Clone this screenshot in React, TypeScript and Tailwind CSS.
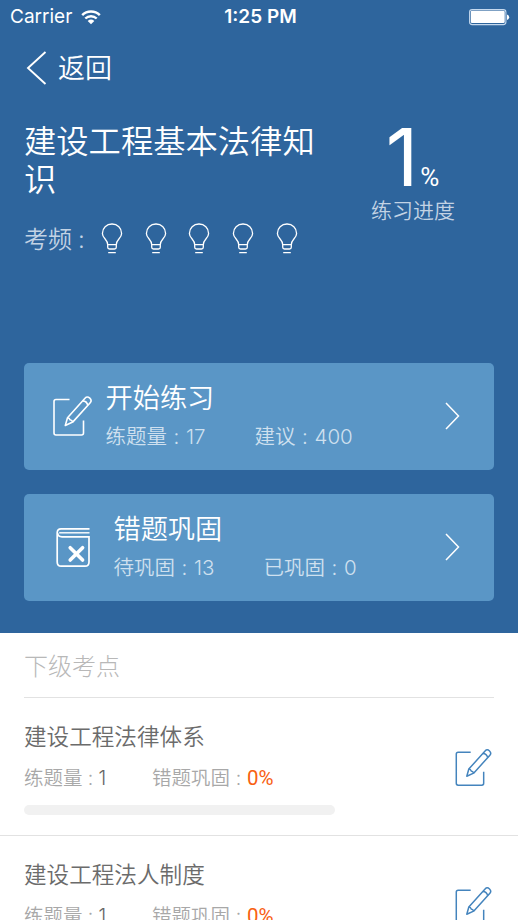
interface IconProps {
    className?: string;
}

interface StatProps {
    label: string;
    value: string;
}

interface Topic {
    title: string;
    count: number;
    wrong: string;
}

const topics: Topic[] = [
    { title: '建设工程法律体系', count: 1, wrong: '0%' },
    { title: '建设工程法人制度', count: 1, wrong: '0%' }
];

function WifiIcon() {
    return (
        <svg width="20" height="15" viewBox="0 0 20 15" fill="none" stroke="currentColor">
            <path d="M1.2 5.2C6 .4 14 .4 18.8 5.2" strokeWidth="2.5" />
            <path d="M4.3 8.5C7.5 5.4 12.5 5.4 15.7 8.5" strokeWidth="2.4" />
            <path d="M6.7 11Q10 8.2 13.3 11L10 14.3Z" fill="currentColor" stroke="none" />
        </svg>
    );
}

function BatteryIcon() {
    return (
        <svg width="41" height="17" viewBox="0 0 41 17">
            <rect x=".6" y=".6" width="36.3" height="15" rx="2.6" fill="none" stroke="#c5d9ee" strokeWidth="1.1" />
            <rect x="1.8" y="1.8" width="33.9" height="12.2" rx="1.2" fill="#fff" />
            <path d="M38 5.6Q40.2 6 40.2 8.3T38 11Z" fill="#fff" />
        </svg>
    );
}

function BulbIcon() {
    return (
        <svg width="22" height="32" viewBox="0 0 22 32" fill="none" stroke="currentColor" strokeWidth="1.3">
            <path d="M6.7 21.7C6.7 16.2 1.4 15.4 1.4 10.4C1.4 5 5.5 1 11 1S20.6 5 20.6 10.4C20.6 15.4 15.3 16.2 15.3 21.7V24.2Q15.3 26 13.5 26H8.5Q6.7 26 6.7 24.2Z" />
            <path d="M6.7 21.7H15.3M7.2 29.6H14.8" />
        </svg>
    );
}

function EditIcon({ className }: IconProps) {
    return (
        <svg viewBox="0 0 40 42" fill="none" stroke="currentColor" strokeWidth="1.6" strokeLinejoin="round" className={className}>
            <path d="M17.5 4.5H4Q2 4.5 2 6.5V38Q2 40 4 40H29.5Q31.5 40 31.5 38V25.5" />
            <path d="M13.3 30.4L15.5 22.7L33 3.2Q35.2.8 37.8 3.2Q40.2 5.5 38.2 7.8L20.7 27.1Z" />
            <path d="M15.5 22.7Q17.5 22.8 18 24.7Q20.3 25 20.7 27.1M30.7 5.9Q34.8 6.1 35.8 10.3" />
        </svg>
    );
}

function BookIcon() {
    return (
        <svg width="35" height="41" viewBox="0 0 35 41" fill="none" stroke="currentColor" strokeWidth="1.7" className="mt-[2px]">
            <path d="M33.5 1.8H5Q1.2 1.8 1.2 5.8V35Q1.2 39.2 5.2 39.2H29Q33 39.2 33 35V9.8H6Q1.8 9.8 1.8 6.3" />
            <path d="M33.5 5.8H3.2" strokeWidth="1.4" />
            <path d="M14.2 20.7L26.6 33.1M26.6 20.7L14.2 33.1" strokeWidth="3.6" strokeLinecap="round" />
        </svg>
    );
}

function ChevronRight() {
    return (
        <svg width="15" height="28" viewBox="0 0 15 28" fill="none" stroke="currentColor" strokeWidth="1.5">
            <path d="M1 1L13.5 14L1 27" />
        </svg>
    );
}

function Stat({ label, value }: StatProps) {
    return (
        <span className="whitespace-nowrap">
            {label}
            <span className="inline-block w-[19px] text-center">:</span>
            {value}
        </span>
    );
}

export default function App() {
    return (
        <div className="h-[920px] w-[518px] overflow-hidden bg-white font-['Inter','Noto_Sans_CJK_SC',sans-serif] font-[350]">
            <header className="h-[633px] bg-[#2e659d] text-white">
                <div className="grid h-[34px] grid-cols-3 items-center pl-[10px] pr-[8px] text-[19px] font-normal">
                    <div className="flex items-center gap-[9px]">
                        <span>Carrier</span>
                        <WifiIcon />
                    </div>
                    <span className="pl-px text-center font-semibold">1:25 PM</span>
                    <div className="flex justify-end">
                        <BatteryIcon />
                    </div>
                </div>

                <div className="flex h-[68px] items-center gap-[11px] pl-[26px]">
                    <svg width="21" height="34" viewBox="0 0 21 34" fill="none" stroke="currentColor" strokeWidth="1.9">
                        <path d="M19.5 1L2 17L19.5 33" />
                    </svg>
                    <span className="pt-[2px] text-[27px] leading-[34px]">返回</span>
                </div>

                <div className="flex h-[261px] pl-6 pt-[21px]">
                    <div className="w-[310px]">
                        <h1 className="text-[32.3px] leading-[38px]">建设工程基本法律知识</h1>
                        <div className="mt-[24px] flex h-[32px] items-center">
                            <span className="w-[77px] pt-px text-[24px] text-[#c3d3e4]">
                                考频<span className="ml-[6px]">:</span>
                            </span>
                            <div className="flex gap-[21.7px]">
                                {[1, 2, 3, 4, 5].map((n) => (
                                    <BulbIcon key={n} />
                                ))}
                            </div>
                        </div>
                    </div>
                    <div className="flex w-[158px] flex-col items-center">
                        <div className="flex h-[72px] items-baseline pr-px leading-[68px]">
                            <span className="text-[80px] font-normal">1</span>
                            <span className="ml-[2px] font-[Roboto] text-[26px] font-normal">%</span>
                        </div>
                        <span className="text-[21px] leading-[32px] text-[#c3d3e4]">练习进度</span>
                    </div>
                </div>

                <div className="flex flex-col gap-6 px-6">
                    <div className="flex h-[107px] items-center rounded-[5px] bg-[#5a96c6] pb-[2px] pl-[28px] pr-[34px]">
                        <EditIcon className="h-[42px] w-[40px]" />
                        <div className="ml-[13.5px] flex-1 pt-[5px]">
                            <div className="text-[27.2px] leading-[37px]">开始练习</div>
                            <div className="flex text-[20.5px] leading-[40px] text-[#cfe0ef]">
                                <div className="w-[149px]">
                                    <Stat label="练题量" value="17" />
                                </div>
                                <Stat label="建议" value="400" />
                            </div>
                        </div>
                        <ChevronRight />
                    </div>
                    <div className="flex h-[107px] items-center rounded-[5px] bg-[#5a96c6] pb-[2px] pl-[32px] pr-[34px]">
                        <BookIcon />
                        <div className="ml-[22.5px] flex-1 pt-[5px]">
                            <div className="text-[27.2px] leading-[37px]">错题巩固</div>
                            <div className="flex text-[20.5px] leading-[40px] text-[#cfe0ef]">
                                <div className="w-[150px]">
                                    <Stat label="待巩固" value="13" />
                                </div>
                                <Stat label="已巩固" value="0" />
                            </div>
                        </div>
                        <ChevronRight />
                    </div>
                </div>
            </header>

            <div className="mx-6 h-[65px] border-b border-[#e2e2e2] text-[24px] font-light leading-[68px] text-[#b8b8b8]">下级考点</div>

            {topics.map((topic) => (
                <div key={topic.title} className="flex h-[138px] items-center justify-between border-b border-[#e2e2e2] pb-[2px] pl-6 pr-[26px]">
                    <div>
                        <div className="text-[22.6px] leading-[42px] text-[#6b6b6b]">{topic.title}</div>
                        <div className="flex text-[19.5px] leading-[40px] text-[#a8a8a8]">
                            <div className="w-[128px]">
                                练题量<span className="inline-block w-[16px] text-center">:</span>
                                <span className="text-[#666]">{topic.count}</span>
                            </div>
                            <div>
                                错题巩固<span className="inline-block w-[17px] text-center">:</span>
                                <span className="font-[Roboto] text-[20.5px] font-normal text-[#f86011]">{topic.wrong}</span>
                            </div>
                        </div>
                        <div className="mt-[7px] h-[10px] w-[311px] rounded-full bg-[#f1f1f1]" />
                    </div>
                    <EditIcon className="mt-[4px] h-[39px] w-[38px] text-[#4484bd]" />
                </div>
            ))}
        </div>
    );
}
